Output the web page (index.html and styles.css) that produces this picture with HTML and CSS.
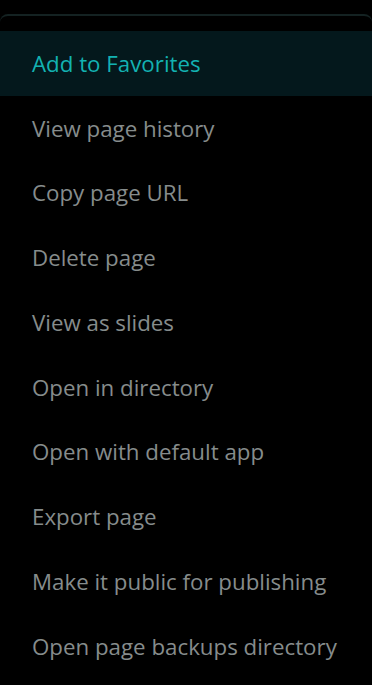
FILE: index.html
```html
<!DOCTYPE html>
<html>
<head>
<meta charset="utf-8">
<link rel="stylesheet" href="styles.css">
</head>
<body>
<div class="menu">
  <ul class="menu-list">
    <li class="menu-item active">Add to Favorites</li>
    <li class="menu-item">View page history</li>
    <li class="menu-item">Copy page URL</li>
    <li class="menu-item">Delete page</li>
    <li class="menu-item">View as slides</li>
    <li class="menu-item">Open in directory</li>
    <li class="menu-item">Open with default app</li>
    <li class="menu-item">Export page</li>
    <li class="menu-item">Make it public for publishing</li>
    <li class="menu-item">Open page backups directory</li>
  </ul>
</div>
</body>
</html>
```
FILE: styles.css
```css
html, body {
  margin: 0;
  padding: 0;
  background: #000;
  height: 100%;
  overflow: hidden;
}
body {
  padding-top: 14px;
  font-family: "Open Sans", "Noto Sans", sans-serif;
}
.menu {
  border-top: 2px solid #142222;
  border-radius: 8px 8px 0 0;
  padding-top: 15px;
}
.menu-list {
  list-style: none;
  margin: 0;
  padding: 0;
  display: flex;
  flex-direction: column;
}
.menu-item {
  height: 64.75px;
  display: flex;
  align-items: center;
  padding-left: 32px;
  font-size: 22.3px;
  color: #868c8c;
  white-space: nowrap;
}
.menu-item.active {
  background: #04181c;
  color: #13b2b2;
}
```
